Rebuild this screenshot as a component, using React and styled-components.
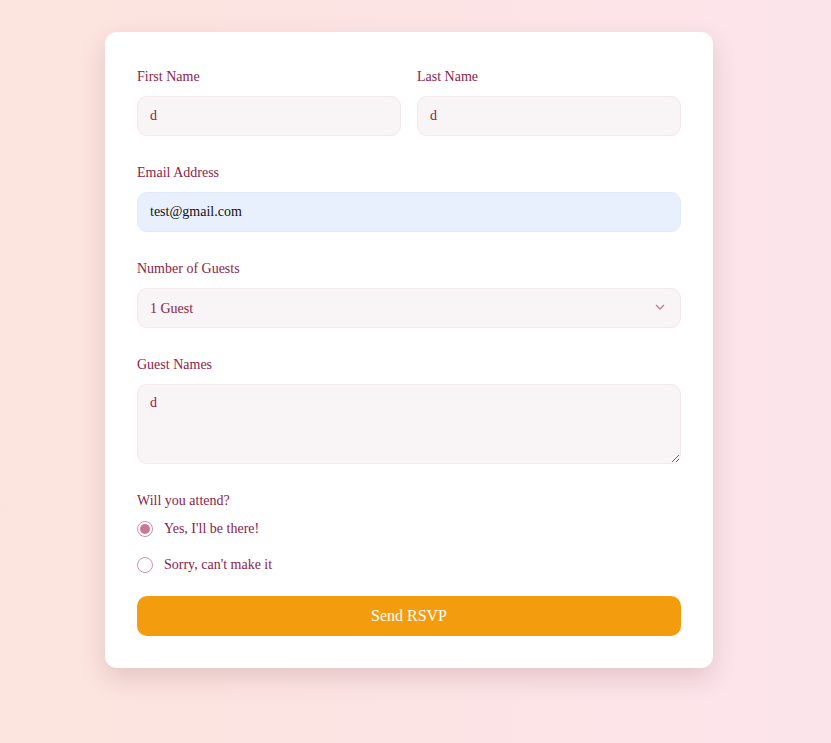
import React from 'react';
import styled, { createGlobalStyle } from 'styled-components';

const GlobalStyle = createGlobalStyle`
  html, body {
    margin: 0;
    padding: 0;
  }
  body {
    min-height: 743px;
    background: linear-gradient(90deg, #fce4de 0%, #fce4ec 100%);
    font-family: "Liberation Serif", "Times New Roman", serif;
  }
`;

const Page = styled.div`
  display: flex;
  justify-content: center;
  padding: 32px 13px 76px 0;
`;

const Card = styled.form`
  width: 608px;
  box-sizing: border-box;
  background: #fff;
  border-radius: 12px;
  padding: 32px;
  box-shadow: 0 10px 25px rgba(120, 60, 70, 0.18);
  display: flex;
  flex-direction: column;
  gap: 24px;
`;

const Row = styled.div`
  display: grid;
  grid-template-columns: 1fr 1fr;
  gap: 16px;
`;

const Field = styled.div`
  display: flex;
  flex-direction: column;
  gap: ${(p) => (p.$tight ? '1px' : '10px')};
`;

const Label = styled.label`
  color: #8c1c47;
  font-size: 14px;
  line-height: 18px;
  padding-top: 4px;
`;

const inputBase = `
  box-sizing: border-box;
  width: 100%;
  font-family: "Liberation Serif", "Times New Roman", serif;
  font-size: 14px;
  color: #8c1c47;
  background: #f9f4f5;
  border: 1px solid #f3e8eb;
  border-radius: 10px;
  padding: 0 12px;
  outline: none;
`;

const Input = styled.input`
  ${inputBase}
  height: 40px;
  ${(p) => p.$autofill && `
    background: #e8f0fe;
    border-color: #e3eaf7;
    color: #111;
  `}
`;

const SelectWrap = styled.div`
  position: relative;
`;

const Select = styled.select`
  ${inputBase}
  height: 40px;
  appearance: none;
`;

const Chevron = styled.svg`
  position: absolute;
  right: 16px;
  top: 15px;
  pointer-events: none;
`;

const TextArea = styled.textarea`
  ${inputBase}
  height: 80px;
  padding: 10px 12px;
  resize: vertical;
`;

const RadioGroup = styled.div`
  display: flex;
  flex-direction: column;
`;

const RadioRow = styled.label`
  display: flex;
  align-items: center;
  gap: 11px;
  height: 36px;
  color: #8c1c47;
  font-size: 14px;
`;

const Radio = styled.input`
  appearance: none;
  margin: 0;
  width: 16px;
  height: 16px;
  box-sizing: border-box;
  border-radius: 50%;
  border: 1px solid #d98ea5;
  background: #fff;
  display: grid;
  place-items: center;
  &:checked::after {
    content: '';
    width: 10px;
    height: 10px;
    border-radius: 50%;
    background: #c97a93;
  }
`;

const Button = styled.button`
  height: 40px;
  border: none;
  border-radius: 10px;
  background: #f39c0e;
  color: #fff;
  font-family: "Liberation Serif", "Times New Roman", serif;
  font-size: 16px;
  font-weight: 400;
  margin-top: -11px;
  cursor: pointer;
`;

const App = () => (
  <>
    <GlobalStyle />
    <Page>
      <Card onSubmit={(e) => e.preventDefault()}>
        <Row>
          <Field>
            <Label>First Name</Label>
            <Input defaultValue="d" />
          </Field>
          <Field>
            <Label>Last Name</Label>
            <Input defaultValue="d" />
          </Field>
        </Row>
        <Field>
          <Label>Email Address</Label>
          <Input $autofill defaultValue="test@gmail.com" />
        </Field>
        <Field>
          <Label>Number of Guests</Label>
          <SelectWrap>
            <Select defaultValue="1">
              <option value="1">1 Guest</option>
              <option value="2">2 Guests</option>
            </Select>
            <Chevron width="10" height="8" viewBox="0 0 10 8">
              <path d="M1 2 L5 6 L9 2" fill="none" stroke="#c97a93" strokeWidth="1.3" />
            </Chevron>
          </SelectWrap>
        </Field>
        <Field>
          <Label>Guest Names</Label>
          <TextArea defaultValue="d" />
        </Field>
        <Field $tight>
          <Label>Will you attend?</Label>
          <RadioGroup>
            <RadioRow>
              <Radio type="radio" name="attend" defaultChecked />
              Yes, I'll be there!
            </RadioRow>
            <RadioRow>
              <Radio type="radio" name="attend" />
              Sorry, can't make it
            </RadioRow>
          </RadioGroup>
        </Field>
        <Button type="submit">Send RSVP</Button>
      </Card>
    </Page>
  </>
);

export default App;
